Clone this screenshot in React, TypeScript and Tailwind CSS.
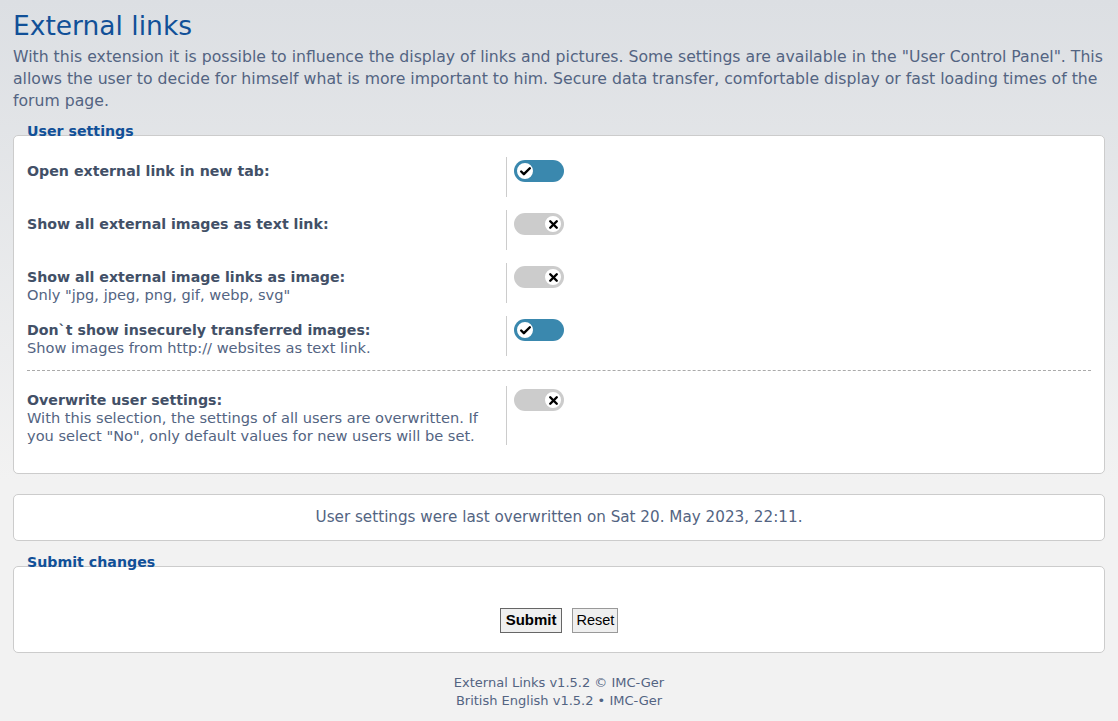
import { Check, X } from 'lucide-react';

interface Setting {
  title: string;
  explain?: string[];
  on: boolean;
}

const settings: Setting[] = [
  { title: 'Open external link in new tab:', on: true },
  { title: 'Show all external images as text link:', on: false },
  { title: 'Show all external image links as image:', explain: ['Only "jpg, jpeg, png, gif, webp, svg"'], on: false },
  { title: 'Don`t show insecurely transferred images:', explain: ['Show images from http:// websites as text link.'], on: true },
];

function Toggle({ on }: { on: boolean }) {
  if (on) {
    return (
      <div className="w-[50px] h-[22px] rounded-full bg-[#3a88ae] flex items-center pl-[1px]">
        <div className="w-[20px] h-[20px] rounded-full bg-white border-2 border-[#3a88ae] flex items-center justify-center">
          <Check size={13} strokeWidth={4.5} className="text-black" />
        </div>
      </div>
    );
  }
  return (
    <div className="w-[50px] h-[22px] rounded-full bg-[#cccccc] flex items-center justify-end pr-[1px]">
      <div className="w-[20px] h-[20px] rounded-full bg-white border-2 border-[#cccccc] flex items-center justify-center">
        <X size={13} strokeWidth={4.5} className="text-black" />
      </div>
    </div>
  );
}

function Row({ s }: { s: Setting }) {
  return (
    <div className="flex">
      <div className="w-[479px] min-h-[40px] pt-[6px]">
        <div className="font-bold text-[14.2px] leading-[17px] text-[#425067]">{s.title}</div>
        {s.explain?.map((line, i) => (
          <div key={i} className="text-[14.6px] leading-[17px] text-[#536482]">{line}</div>
        ))}
      </div>
      <div className="border-l border-[#cccccc] pl-[7px] pt-[3px]">
        <Toggle on={s.on} />
      </div>
    </div>
  );
}

export default function App() {
  return (
    <div className="min-h-[721px] bg-[linear-gradient(to_bottom,#dcdfe3_0px,#f2f2f2_480px)] px-[13px] pt-[8px] pb-[16px] font-['DejaVu_Sans',sans-serif] text-[#536482]">
      {/* Titel */}
      <h1 className="text-[26.5px] leading-[36px] text-[#115098]">External links</h1>
      <p className="text-[15.7px] leading-[22px] mt-[2px]">
        With this extension it is possible to influence the display of links and pictures. Some settings are available in the "User Control Panel". This allows the user to decide for himself what is more important to him. Secure data transfer, comfortable display or fast loading times of the forum page.
      </p>

      {/* User settings */}
      <div className="mt-[23px] relative">
        <div className="absolute left-[14px] -top-[13px] font-bold text-[14.2px] leading-[18px] text-[#115098]">User settings</div>
        <div className="bg-white border border-[#cccccc] rounded-[5px] pt-[21px] pb-[28px] px-[13px]">
          <div className="flex flex-col gap-[13px]">
            {settings.map((s, i) => (
              <Row key={i} s={s} />
            ))}
          </div>
          <div className="border-t border-dashed border-[#aaaaaa] mt-[14px] mb-[15px]" />
          <div className="flex">
            <div className="w-[479px] min-h-[58px] pt-[6px]">
              <div className="font-bold text-[14.2px] leading-[17px] text-[#425067]">Overwrite user settings:</div>
              <div className="text-[14.6px] leading-[18px] text-[#536482]">
                With this selection, the settings of all users are overwritten. If you select "No", only default values for new users will be set.
              </div>
            </div>
            <div className="border-l border-[#cccccc] pl-[7px] pt-[3px]">
              <Toggle on={false} />
            </div>
          </div>
        </div>
      </div>

      {/* last overwritten */}
      <div className="mt-[20px] bg-white border border-[#cccccc] rounded-[5px] h-[47px] flex items-center justify-center text-[15.2px]">
        User settings were last overwritten on Sat 20. May 2023, 22:11.
      </div>

      {/* Submit */}
      <div className="mt-[25px] relative">
        <div className="absolute left-[14px] -top-[13px] font-bold text-[14.2px] leading-[18px] text-[#115098]">Submit changes</div>
        <div className="bg-white border border-[#cccccc] rounded-[5px] h-[87px] flex items-end justify-center gap-[10px] pb-[19px]">
          <button className="h-[25px] px-[5px] border border-[#666666] bg-[#efefef] font-['Liberation_Sans',sans-serif] font-bold text-[15px] text-black">Submit</button>
          <button className="h-[25px] px-[3px] border border-[#999999] bg-[#efefef] font-['Liberation_Sans',sans-serif] text-[14.5px] text-black">Reset</button>
        </div>
      </div>

      {/* Footer */}
      <div className="mt-[21px] text-center text-[13px] leading-[18px]">
        <div>External Links v1.5.2 © IMC-Ger</div>
        <div>British English v1.5.2 • IMC-Ger</div>
      </div>
    </div>
  );
}
